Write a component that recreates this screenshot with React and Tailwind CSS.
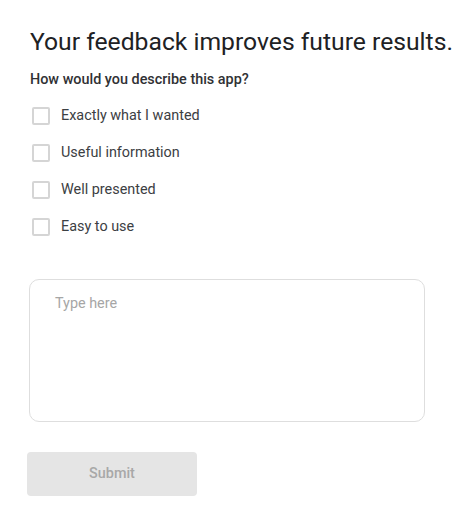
import React, { useState } from "react";

const options = [
  "Exactly what I wanted",
  "Useful information",
  "Well presented",
  "Easy to use",
];

const App = () => {
  const [checked, setChecked] = useState({});
  const [text, setText] = useState("");

  return (
    <div className="min-h-screen bg-white text-[#202124] font-['Roboto',sans-serif]">
      <div className="pl-[30px] pt-[26px]">
        <h1 className="text-[24.7px] leading-[32px] font-normal">
          Your feedback improves future results.
        </h1>
        <p className="mt-[12px] text-[14.4px] leading-[20px] font-medium text-[#303134]">
          How would you describe this app?
        </p>

        <div className="mt-[17px] flex flex-col gap-[19px] pl-[2px]">
          {options.map((opt) => (
            <label key={opt} className="flex items-center gap-[11px] h-[18px] cursor-pointer">
              <input
                type="checkbox"
                className="sr-only"
                checked={!!checked[opt]}
                onChange={() => setChecked({ ...checked, [opt]: !checked[opt] })}
              />
              <span className="w-[18px] h-[18px] border-2 border-[#d5d5d5] rounded-[2px] bg-white" />
              <span className="text-[14.4px] leading-[20px] text-[#3c4043]">{opt}</span>
            </label>
          ))}
        </div>

        <textarea
          value={text}
          onChange={(e) => setText(e.target.value)}
          placeholder="Type here"
          className="mt-[43px] -ml-px block w-[396px] h-[143px] resize-none rounded-[10px] border border-[#dedede] px-[25px] py-[14px] text-[14.4px] leading-[20px] outline-none placeholder:text-[#a6a6a6]"
        />

        <button
          disabled
          className="mt-[30px] -ml-[3px] w-[170px] h-[44px] rounded-[4px] bg-[#e5e5e5] text-[14.4px] font-medium text-[#a8a8a8]"
        >
          Submit
        </button>
      </div>
    </div>
  );
};

export default App;
